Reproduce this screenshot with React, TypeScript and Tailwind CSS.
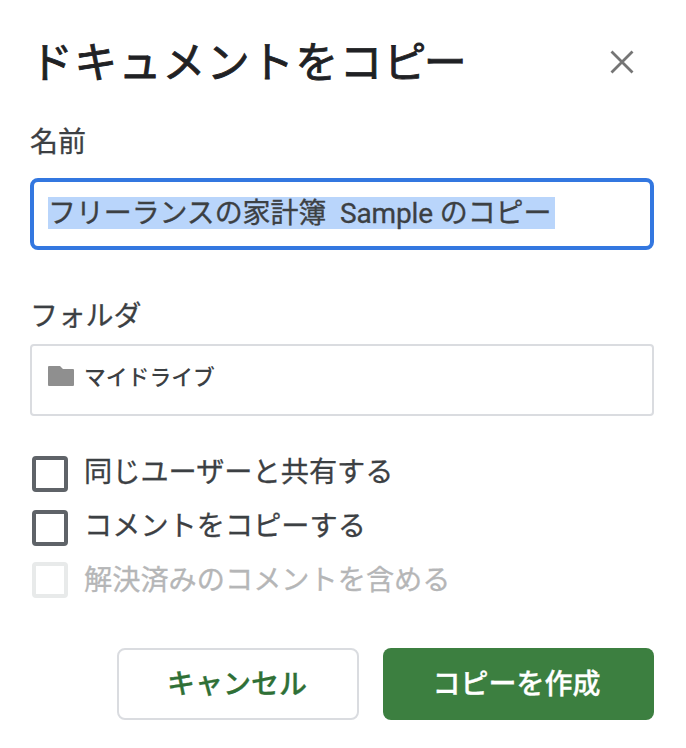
import { useState } from "react";

type CopyOption = {
  id: string;
  label: string;
  disabled?: boolean;
};

const options: CopyOption[] = [
  { id: "share", label: "同じユーザーと共有する" },
  { id: "comments", label: "コメントをコピーする" },
  { id: "resolved", label: "解決済みのコメントを含める", disabled: true },
];

export default function App() {
  const [checked, setChecked] = useState<Record<string, boolean>>({});

  const toggle = (id: string) =>
    setChecked((prev) => ({ ...prev, [id]: !prev[id] }));

  return (
    <div
      role="dialog"
      aria-labelledby="copy-title"
      className="h-[748px] w-[686px] overflow-hidden bg-white pl-[30px] pr-8 font-[Roboto,'Noto_Sans_CJK_JP',sans-serif] text-[#3c4043] [-webkit-text-stroke:0.3px]"
    >
      {/* Header */}
      <header className="flex h-[124px] items-center justify-between pr-5">
        <h1
          id="copy-title"
          className="whitespace-nowrap pt-0.5 text-[43px] leading-none font-normal tracking-[1.2px] text-[#202124] [-webkit-text-stroke:0.8px]"
        >
          ドキュメントをコピ<span className="-ml-1">ー</span>
        </h1>
        <button type="button" aria-label="閉じる" className="shrink-0">
          <svg viewBox="0 0 24 24" className="h-6 w-6" fill="none" stroke="#757575" strokeWidth="2.8">
            <path d="M1.5 1.5l21 21M22.5 1.5l-21 21" />
          </svg>
        </button>
      </header>

      {/* Name */}
      <div className="h-[54px] pt-px text-[28px] leading-9">名前</div>
      <div className="flex h-[72px] items-start rounded-lg border-4 border-[#3377e0] pt-[15px] pl-[14px]">
        <span className="h-8 whitespace-pre bg-[#b9d5fb] pr-1 text-[28px] leading-[34px] tracking-[-0.12px]">
          フリーランスの家計簿  Sample のコピー
        </span>
      </div>

      {/* Folder */}
      <div className="mt-[47px] h-[47px] pt-0.5 text-[28px] leading-9 tracking-[-0.2px]">フォルダ</div>
      <button
        type="button"
        className="flex h-[72px] w-full items-center rounded border-2 border-[#dadce0] pb-1.5 pl-4 text-left"
      >
        <svg viewBox="0 0 26 20" className="mb-0.5 h-5 w-[26px]" fill="#8f8f8f">
          <path d="M1 0h11l3 3h10a1 1 0 0 1 1 1v15a1 1 0 0 1-1 1H1a1 1 0 0 1-1-1V1a1 1 0 0 1 1-1z" />
        </svg>
        <span className="ml-2.5 pt-0.5 text-[21.8px] leading-8 font-medium [-webkit-text-stroke:0]">
          マイドライブ
        </span>
      </button>

      {/* Options */}
      <div className="mt-[31px]">
        {options.map((o) => (
          <label
            key={o.id}
            className={[
              "flex h-[54px] items-center pl-0.5 text-[28.2px] leading-9",
              o.disabled ? "text-[#b5b6b7]" : "",
            ].join(" ")}
          >
            <input
              type="checkbox"
              disabled={o.disabled}
              checked={!!checked[o.id]}
              onChange={() => toggle(o.id)}
              className={[
                "h-9 w-9 shrink-0 appearance-none rounded border-4 checked:bg-[#3c7f40]",
                o.disabled ? "mb-1 border-[#e8eaea]" : "border-[#5f6368]",
              ].join(" ")}
            />
            <span className="ml-4 pb-0.5">{o.label}</span>
          </label>
        ))}
      </div>

      {/* Actions */}
      <footer className="mt-[39px] flex justify-end gap-6 text-[28px] font-medium">
        <button
          type="button"
          className="h-[72px] w-[242px] rounded-lg border-2 border-[#dadce0] pt-0.5 pr-0.5 text-[#2f7036]"
        >
          キャンセル
        </button>
        <button
          type="button"
          className="h-[72px] w-[271px] rounded-lg bg-[#3c7f40] pt-0.5 pr-1 text-white"
        >
          コピーを作成
        </button>
      </footer>
    </div>
  );
}
